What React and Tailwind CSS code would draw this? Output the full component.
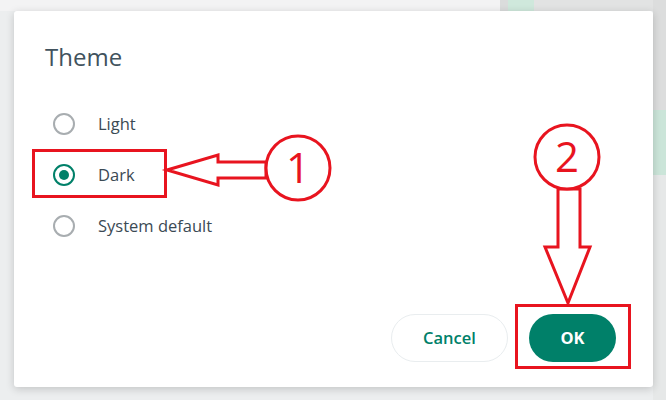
import React from 'react';

const options = [
  { label: 'Light', checked: false },
  { label: 'Dark', checked: true },
  { label: 'System default', checked: false },
];

const Radio = ({ checked }) => (
  <span
    className={`w-[22px] h-[22px] rounded-full border-2 flex items-center justify-center shrink-0 ${
      checked ? 'border-[#008069]' : 'border-[#a8adb0]'
    }`}
  >
    {checked && <span className="w-[10px] h-[10px] rounded-full bg-[#008069]" />}
  </span>
);

// red callouts drawn over the dialog
const Annotations = () => (
  <svg className="absolute inset-0 pointer-events-none" width="666" height="400" viewBox="0 0 666 400">
    <g fill="none" stroke="#e8141f" strokeWidth="3">
      <rect x="33.5" y="150.5" width="132" height="46" />
      <path d="M167 170 L218 155 L218 162 L266 162 L266 178 L218 178 L218 185 Z" fill="#fff" />
      <circle cx="298" cy="168" r="32" fill="#fff" />
      <rect x="516.5" y="305.5" width="113" height="62" />
      <path d="M558 189 L558 247 L545 247 L568 303 L590 247 L580 247 L580 189 Z" fill="#fff" />
      <circle cx="567" cy="157" r="32" fill="#fff" />
    </g>
    <text x="298" y="183" textAnchor="middle" fill="#e8141f" fontSize="42" fontFamily="'Open Sans', sans-serif">1</text>
    <text x="567" y="172" textAnchor="middle" fill="#e8141f" fontSize="42" fontFamily="'Open Sans', sans-serif">2</text>
  </svg>
);

export default function App() {
  return (
    <div className="relative w-[666px] h-[400px] overflow-hidden bg-[#eceeef] font-['Open_Sans',sans-serif]">
      {/* background peeking around the dialog */}
      <div className="absolute top-0 left-0 w-[666px] h-[11px] flex">
        <div className="w-[500px] bg-[#f3f3f4]" />
        <div className="w-[8px] bg-[#dadcdc]" />
        <div className="w-[26px] bg-[#cfe8dc]" />
        <div className="flex-1 bg-[#e2e3e3]" />
      </div>
      <div className="absolute top-0 right-0 w-[13px] h-[400px] flex flex-col">
        <div className="h-[110px] bg-[#dcdddd]" />
        <div className="h-[65px] bg-[#cbe5d9]" />
        <div className="flex-1 bg-[#e6e8e8]" />
      </div>

      <div className="absolute left-[14px] top-[11px] w-[639px] h-[376px] bg-white rounded-[3px] shadow-[0_2px_8px_rgba(0,0,0,0.18)] flex flex-col pl-[31px] pr-[37px] pt-[30px] pb-[25px]">
        <h2 className="text-[24px] leading-[32px] text-[#41525d]">Theme</h2>
        <div className="flex flex-col mt-[40px] gap-[29px]">
          {options.map((o) => (
            <label key={o.label} className="flex items-center gap-[23px] pl-[8px] h-[22px]">
              <Radio checked={o.checked} />
              <span className="text-[16.5px] text-[#3b4a54]">{o.label}</span>
            </label>
          ))}
        </div>
        <div className="mt-auto flex justify-end gap-[21px]">
          <button className="w-[117px] h-[48px] rounded-full border border-[#e9edef] bg-white text-[16.5px] font-semibold text-[#008069]">
            Cancel
          </button>
          <button className="w-[87px] h-[48px] rounded-full bg-[#008069] text-[16.5px] font-bold text-white">
            OK
          </button>
        </div>
      </div>

      <Annotations />
    </div>
  );
}
